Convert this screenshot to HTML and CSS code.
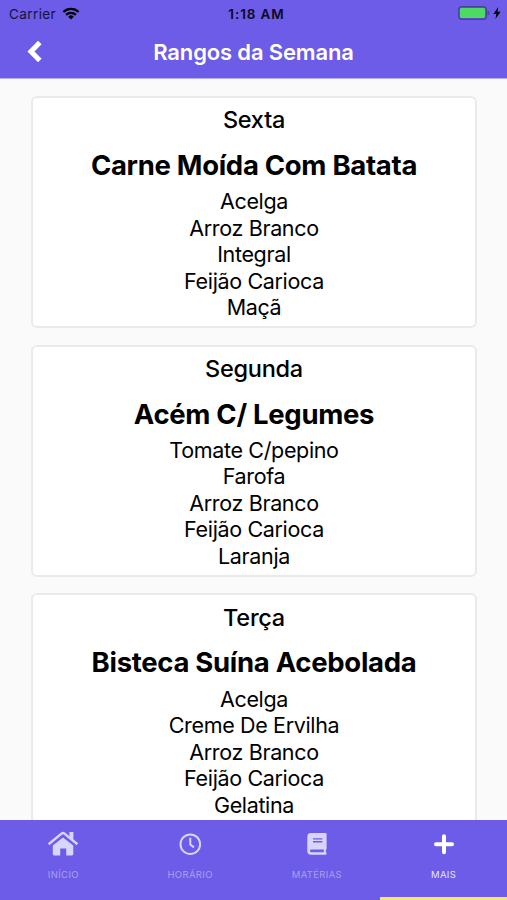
FILE: index.html
```
<!DOCTYPE html>
<html lang="pt-BR">
<head>
  <meta charset="UTF-8" />
  <meta name="viewport" content="width=device-width, initial-scale=1" />
  <title>Rangos da Semana</title>
  <link rel="stylesheet" href="styles.css">
</head>
<body>
  <div class="app">
    <header class="header">
      <div class="status-bar">
        <div class="carrier">
          <span>Carrier</span>
          <svg class="wifi" viewBox="0 0 18 13" width="18" height="13">
            <path d="M1.4 5 A10.8 10.8 0 0 1 16.6 5" />
            <path d="M4.1 7.9 A7 7 0 0 1 13.9 7.9" />
            <path class="dot" d="M6.2 9.7 A4 4 0 0 1 11.8 9.7 L9 12.6 Z" />
          </svg>
        </div>
        <span class="time">1:18 AM</span>
        <div class="power">
          <svg viewBox="0 0 32 14" width="32" height="14">
            <rect x=".7" y=".7" width="27.6" height="12.6" rx="3" fill="none" stroke="#4b409f" stroke-width="1.4" />
            <rect x="2" y="2" width="25" height="10" rx="1.4" fill="#4cd964" />
            <path d="M29.6 4.6 Q31.6 5.3 31.6 7 Q31.6 8.7 29.6 9.4 Z" fill="#4b409f" />
          </svg>
          <svg viewBox="0 0 8 12" width="8" height="12">
            <path d="M5.3 0 L0.4 7 H3.4 L2.4 12 L7.6 4.8 H4.5 Z" fill="#000" />
          </svg>
        </div>
      </div>
      <div class="title-bar">
        <svg class="back" viewBox="0 0 16 24" width="16" height="24">
          <path d="M12.8 2.4 L4 11.4 L12.8 20.4" />
        </svg>
        <h1>Rangos da Semana</h1>
      </div>
    </header>

    <main class="menu">
      <section class="card">
        <h2>Sexta</h2>
        <h3>Carne Moída Com Batata</h3>
        <ul>
          <li>Acelga</li>
          <li>Arroz Branco</li>
          <li>Integral</li>
          <li>Feijão Carioca</li>
          <li>Maçã</li>
        </ul>
      </section>
      <section class="card">
        <h2>Segunda</h2>
        <h3>Acém C/ Legumes</h3>
        <ul>
          <li>Tomate C/pepino</li>
          <li>Farofa</li>
          <li>Arroz Branco</li>
          <li>Feijão Carioca</li>
          <li>Laranja</li>
        </ul>
      </section>
      <section class="card">
        <h2>Terça</h2>
        <h3>Bisteca Suína Acebolada</h3>
        <ul>
          <li>Acelga</li>
          <li>Creme De Ervilha</li>
          <li>Arroz Branco</li>
          <li>Feijão Carioca</li>
          <li>Gelatina</li>
        </ul>
      </section>
    </main>

    <nav class="tabs">
      <a class="tab">
        <svg viewBox="0 0 32 26" width="32" height="26">
          <path d="M16 7.4 L26.3 15.6 V24 Q26.3 25.4 25 25.4 H19.2 V18.5 H13.2 V25.4 H7.2 Q5.8 25.4 5.8 24 V15.6 Z" fill="currentColor" />
          <path d="M1.6 14.2 L14.8 3.4 Q16 2.5 17.2 3.4 L30.4 14.2" fill="none" stroke="currentColor" stroke-width="2.5" />
          <path d="M22.4 2 H26.4 V10.8 L22.4 7.5 Z" fill="currentColor" />
        </svg>
        <span>INÍCIO</span>
      </a>
      <a class="tab">
        <svg viewBox="0 0 24 26" width="24" height="26">
          <circle cx="12.3" cy="14.2" r="9.8" fill="none" stroke="currentColor" stroke-width="2" />
          <path d="M12.3 7.8 V14.6 L16 17.4" fill="none" stroke="currentColor" stroke-width="2" />
        </svg>
        <span>HORÁRIO</span>
      </a>
      <a class="tab">
        <svg viewBox="0 0 24 26" width="24" height="26">
          <path fill="currentColor" fill-rule="evenodd" d="M6 3 H20.5 Q21.6 3 21.6 4.1 V18.6 Q21.6 19.4 21 19.8 Q20.6 21 21 22.3 Q21.6 22.6 21.6 23.4 Q21.6 24.8 20.4 24.8 H6 Q2.3 24.8 2.3 21 V7 Q2.3 3 6 3 Z M8 8.2 V9.6 H17.4 V8.2 Z M8 11 V12.4 H17.4 V11 Z M6.2 19.5 Q5 19.5 5 20.9 Q5 22.2 6.2 22.2 H18.8 V19.5 Z" />
        </svg>
        <span>MATÉRIAS</span>
      </a>
      <a class="tab active">
        <svg viewBox="0 0 24 26" width="24" height="26">
          <path d="M12 6.2 V22.2 M4 14.2 H20" fill="none" stroke="currentColor" stroke-width="4" stroke-linecap="round" />
        </svg>
        <span>MAIS</span>
      </a>
    </nav>
  </div>
</body>
</html>
```
FILE: styles.css
```
* {
  box-sizing: border-box;
}

body {
  margin: 0;
  font-family: Inter, "Liberation Sans", sans-serif;
  color: #000;
  background-color: #fafafa;
}

h1, h2, h3, ul {
  margin: 0;
  padding: 0;
}

.app {
  display: flex;
  flex-direction: column;
  height: 900px;
  overflow: hidden;
}

/* header */
.header {
  flex: none;
  height: 79px;
  background-color: #6c5ce7;
  border-bottom: 1px solid #b5adf3;
}

.status-bar {
  display: grid;
  grid-template-columns: 1fr auto 1fr;
  align-items: center;
  height: 27px;
  padding: 0 6px 0 9px;
  font-size: 13.5px;
}

.carrier {
  display: flex;
  align-items: center;
  gap: 6px;
  color: #17133a;
  letter-spacing: 0.4px;
}

.wifi {
  fill: none;
  stroke: #000;
  stroke-width: 2.2;
}

.wifi .dot {
  fill: #000;
  stroke: none;
}

.time {
  padding-left: 3px;
  font-weight: 600;
  letter-spacing: 0.9px;
  color: #0b0820;
}

.power {
  display: flex;
  align-items: center;
  justify-content: flex-end;
  gap: 3px;
  margin-top: -1px;
}

.title-bar {
  display: grid;
  grid-template-columns: 54px 1fr 54px;
  align-items: center;
  height: 50px;
  color: #fff;
}

.title-bar h1 {
  font-size: 22px;
  font-weight: 600;
  letter-spacing: -0.15px;
  text-align: center;
}

.back {
  margin-left: 27px;
  fill: none;
  stroke: #fff;
  stroke-width: 5;
}

/* cards */
.menu {
  flex: 1;
  min-height: 0;
  padding: 17px 30px 0 31px;
  overflow: hidden;
}

.card {
  height: 232px;
  margin-bottom: 16.7px;
  padding-top: 7.4px;
  background-color: #fff;
  border: 2px solid #e9ebeb;
  border-radius: 6px;
  text-align: center;
}

.card h2 {
  font-size: 23.5px;
  font-weight: 500;
  line-height: 30px;
  letter-spacing: -0.25px;
}

.card h3 {
  margin-top: 11.6px;
  font-size: 27.5px;
  font-weight: 700;
  line-height: 36px;
  letter-spacing: -0.3px;
}

.card ul {
  margin-top: 5.3px;
  list-style: none;
}

.card li {
  font-size: 21.5px;
  line-height: 26.5px;
  letter-spacing: -0.35px;
}

/* bottom tabs */
.tabs {
  flex: none;
  display: grid;
  grid-template-columns: repeat(4, 1fr);
  height: 80px;
  background-color: #6c5ce7;
}

.tab {
  display: flex;
  flex-direction: column;
  align-items: center;
  padding-top: 10px;
  color: #d9d4fb;
}

.tab span {
  margin-top: 12px;
  font-size: 9.5px;
  line-height: 14px;
  letter-spacing: 0.35px;
  color: #aaa0f2;
}

.tab.active {
  color: #fff;
  border-bottom: 3px solid #f9e76c;
}

.tab.active span {
  color: #e9e6fd;
}
```
